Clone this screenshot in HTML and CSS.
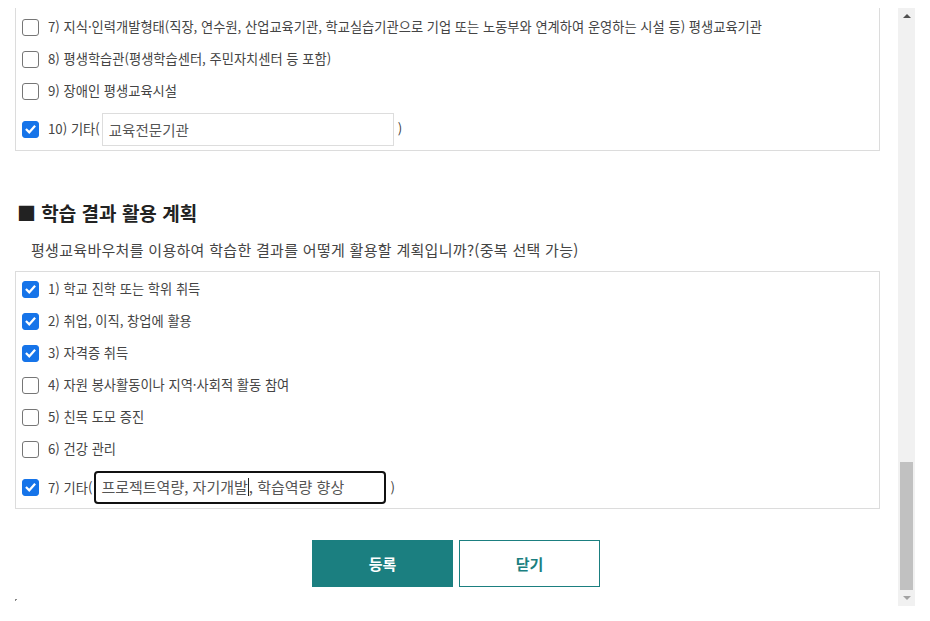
FILE: index.html
```html
<!DOCTYPE html>
<html lang="ko">
<head>
<meta charset="utf-8">
<title>학습 결과 활용 계획</title>
<link rel="stylesheet" href="styles.css">
</head>
<body>
<div class="frame">
  <div class="viewport">
    <div class="box box-cut">
      <div class="row"><span class="cb"></span><span class="label">7) 지식·인력개발형태(직장, 연수원, 산업교육기관, 학교실습기관으로 기업 또는 노동부와 연계하여 운영하는 시설 등) 평생교육기관</span></div>
      <div class="row"><span class="cb"></span><span class="label">8) 평생학습관(평생학습센터, 주민자치센터 등 포함)</span></div>
      <div class="row"><span class="cb"></span><span class="label">9) 장애인 평생교육시설</span></div>
      <div class="row row-etc"><span class="cb on"><svg viewBox="0 0 17 17"><path d="M4.2 8.8l2.9 2.9 5.8-6.4"/></svg></span><span class="label">10) 기타(</span><div class="field">교육전문기관</div><span class="label">)</span></div>
    </div>

    <h2 class="heading">■ 학습 결과 활용 계획</h2>
    <p class="question">평생교육바우처를 이용하여 학습한 결과를 어떻게 활용할 계획입니까?(중복 선택 가능)</p>

    <div class="box">
      <div class="row"><span class="cb on"><svg viewBox="0 0 17 17"><path d="M4.2 8.8l2.9 2.9 5.8-6.4"/></svg></span><span class="label">1) 학교 진학 또는 학위 취득</span></div>
      <div class="row"><span class="cb on"><svg viewBox="0 0 17 17"><path d="M4.2 8.8l2.9 2.9 5.8-6.4"/></svg></span><span class="label">2) 취업, 이직, 창업에 활용</span></div>
      <div class="row"><span class="cb on"><svg viewBox="0 0 17 17"><path d="M4.2 8.8l2.9 2.9 5.8-6.4"/></svg></span><span class="label">3) 자격증 취득</span></div>
      <div class="row"><span class="cb"></span><span class="label">4) 자원 봉사활동이나 지역·사회적 활동 참여</span></div>
      <div class="row"><span class="cb"></span><span class="label">5) 친목 도모 증진</span></div>
      <div class="row"><span class="cb"></span><span class="label">6) 건강 관리</span></div>
      <div class="row row-etc row-etc2"><span class="cb on"><svg viewBox="0 0 17 17"><path d="M4.2 8.8l2.9 2.9 5.8-6.4"/></svg></span><span class="label">7) 기타(</span><div class="field field-focus">프로젝트역량, 자기개발<span class="caret"></span>, 학습역량 향상</div><span class="label">)</span></div>
    </div>

    <div class="actions">
      <button class="btn btn-primary" type="button">등록</button>
      <button class="btn btn-ghost" type="button">닫기</button>
    </div>
    <div class="grip-row"><span class="grip"></span></div>
  </div>
  <div class="scrollbar">
    <span class="sb-arrow sb-up"></span>
    <div class="sb-track"><div class="sb-thumb"></div></div>
    <span class="sb-arrow sb-down"></span>
  </div>
</div>
</body>
</html>
```

FILE: styles.css
```css
* { box-sizing: border-box; }

html, body {
  margin: 0;
  padding: 0;
  background: #fff;
}

body {
  font-family: "Noto Sans CJK KR", "Noto Sans", sans-serif;
  color: #444;
  width: 930px;
  height: 621px;
  overflow: hidden;
}

.frame {
  display: flex;
  padding-top: 8px;
  height: 621px;
}

.viewport {
  width: 898px;
  height: 598px;
  overflow: hidden;
  display: flex;
  flex-direction: column;
}

.box {
  margin-left: 15px;
  width: 865px;
  border: 1px solid #dcdcdc;
  padding: 1px 0 0 6px;
  flex-shrink: 0;
}

.box-cut {
  border-top: none;
  padding-top: 3px;
}

.row {
  display: flex;
  align-items: center;
  height: 32px;
}

.row-etc {
  height: 43px;
  padding-top: 1px;
}

.row-etc2 {
  height: 43px;
  padding-top: 2px;
}

.cb {
  width: 17px;
  height: 17px;
  border: 1px solid #767676;
  border-radius: 3px;
  background: #fff;
  flex-shrink: 0;
  margin-right: 9px;
  display: flex;
  align-items: center;
  justify-content: center;
}

.cb.on {
  background: #1674e9;
  border-color: #1674e9;
}

.cb svg {
  width: 17px;
  height: 17px;
}

.cb svg path {
  fill: none;
  stroke: #fff;
  stroke-width: 2.5;
  stroke-linecap: square;
}

.label {
  font-size: 13.25px;
  line-height: 18px;
  color: #444;
  letter-spacing: 0;
  white-space: nowrap;
}

.field {
  margin: 0 4px 0 2px;
  width: 292px;
  height: 33px;
  border: 1px solid #ddd;
  padding: 0 6px;
  font-size: 14.5px;
  line-height: 31px;
  color: #555;
  white-space: nowrap;
}

.field-focus {
  margin-left: 2px;
  width: 292px;
  height: 33px;
  border: 2px solid #111;
  border-radius: 4px;
  padding: 0 5px;
  line-height: 28px;
  font-size: 15px;
  color: #555;
}

.caret {
  display: inline-block;
  width: 1px;
  height: 18px;
  background: #222;
  vertical-align: -3px;
}

.heading {
  margin: 49px 0 0 17px;
  font-size: 19px;
  line-height: 26px;
  font-weight: 700;
  color: #222;
  letter-spacing: 0;
}

.question {
  margin: 13px 0 10px 31px;
  font-size: 15px;
  line-height: 22px;
  color: #444;
  letter-spacing: 0.3px;
}

.actions {
  display: flex;
  gap: 6px;
  padding-left: 312px;
  margin-top: 31px;
}

.btn {
  width: 141px;
  height: 47px;
  font-family: "Noto Sans CJK KR", "Noto Sans", sans-serif;
  font-size: 15px;
  font-weight: 700;
  cursor: pointer;
  padding: 0;
}

.btn-primary {
  background: #1b7f80;
  border: 1px solid #1b7f80;
  color: #fff;
}

.btn-ghost {
  background: #fff;
  border: 1px solid #1b7f80;
  color: #1b7f80;
}

.grip-row {
  padding: 12px 0 0 15px;
}

.grip {
  display: block;
  width: 3px;
  height: 3px;
  background: linear-gradient(135deg, #888 0 50%, transparent 50%);
}

.scrollbar {
  width: 17px;
  height: 598px;
  background: #f1f1f1;
  display: flex;
  flex-direction: column;
  align-items: center;
}

.sb-arrow {
  width: 0;
  height: 0;
  border-left: 4px solid transparent;
  border-right: 4px solid transparent;
  margin: 6px 0;
}

.sb-up {
  border-bottom: 4px solid #505050;
}

.sb-down {
  border-top: 4px solid #a3a3a3;
}

.sb-track {
  flex: 1;
  width: 100%;
  display: flex;
  flex-direction: column;
  justify-content: flex-end;
  align-items: center;
}

.sb-thumb {
  width: 13px;
  height: 128px;
  background: #c1c1c1;
}
```
